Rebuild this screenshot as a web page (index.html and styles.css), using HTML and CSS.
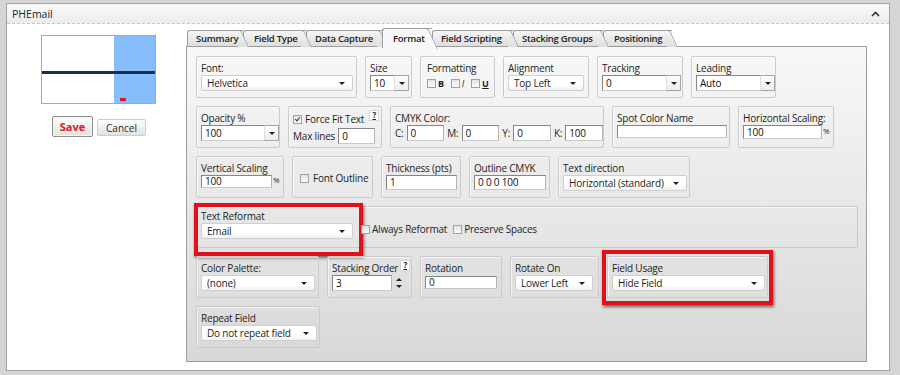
FILE: index.html
```html
<!DOCTYPE html>
<html lang="en">
<head>
    <meta charset="UTF-8">
    <meta name="viewport" content="width=device-width, initial-scale=1.0">
    <title>PHEmail</title>
    <link rel="stylesheet" href="styles.css">
</head>
<body>
    <div class="window">

        <div class="titlebar">
            <span>PHEmail</span>
            <svg class="chevron" width="9" height="6" viewBox="0 0 9 6"><polyline points="1,5 4.5,1.5 8,5" fill="none" stroke="#333" stroke-width="1.6"/></svg>
        </div>

        <div class="main">

            <div class="side">
                <div class="preview">
                    <div class="pv-white"></div>
                    <div class="pv-blue"><span class="pv-dot"></span></div>
                    <span class="pv-line"></span>
                </div>
                <div class="buttons">
                    <button class="btn save">Save</button>
                    <button class="btn cancel">Cancel</button>
                </div>
            </div>

            <div class="editor">

                <div class="tabs">
                    <div class="tab">Summary</div>
                    <div class="tab">Field Type</div>
                    <div class="tab">Data Capture</div>
                    <div class="tab active">Format</div>
                    <div class="tab">Field Scripting</div>
                    <div class="tab">Stacking Groups</div>
                    <div class="tab">Positioning</div>
                </div>

                <div class="panel">

                    <!-- row 1 -->
                    <div class="row">
                        <div class="grp g-font">
                            <div class="lbl">Font:</div>
                            <div class="select s-font"><span>Helvetica</span><i class="caret"></i></div>
                        </div>
                        <div class="grp g-size">
                            <div class="lbl">Size</div>
                            <div class="combo"><span class="field c-size">10</span><span class="drop"><i class="caret"></i></span></div>
                        </div>
                        <div class="grp g-fmt">
                            <div class="lbl">Formatting</div>
                            <div class="checks">
                                <span class="chk"></span><b>B</b>
                                <span class="chk"></span><b class="it">I</b>
                                <span class="chk"></span><b class="ul">U</b>
                            </div>
                        </div>
                        <div class="grp g-align">
                            <div class="lbl">Alignment</div>
                            <div class="select s-align"><span>Top Left</span><i class="caret"></i></div>
                        </div>
                        <div class="grp g-track">
                            <div class="lbl">Tracking</div>
                            <div class="combo"><span class="field c-wide">0</span><span class="drop"><i class="caret"></i></span></div>
                        </div>
                        <div class="grp g-lead">
                            <div class="lbl">Leading</div>
                            <div class="combo"><span class="field c-wide">Auto</span><span class="drop"><i class="caret"></i></span></div>
                        </div>
                    </div>

                    <!-- row 2 -->
                    <div class="row">
                        <div class="grp g-opac">
                            <div class="lbl">Opacity %</div>
                            <div class="combo"><span class="field c-opac">100</span><span class="drop"><i class="caret"></i></span></div>
                        </div>
                        <div class="grp g-fit">
                            <div class="line"><span class="chk on"></span>Force Fit Text<span class="help">?</span></div>
                            <div class="line">Max lines <span class="field f-max">0</span></div>
                        </div>
                        <div class="grp g-cmyk">
                            <div class="lbl">CMYK Color:</div>
                            <div class="line">
                                C: <span class="field f-c">0</span>
                                M: <span class="field f-c">0</span>
                                Y: <span class="field f-c">0</span>
                                K: <span class="field f-c">100</span>
                            </div>
                        </div>
                        <div class="grp g-spot">
                            <div class="lbl">Spot Color Name</div>
                            <span class="field f-spot"></span>
                        </div>
                        <div class="grp g-horiz">
                            <div class="lbl">Horizontal Scaling:</div>
                            <div class="line"><span class="field f-horiz">100</span><sup>%</sup></div>
                        </div>
                    </div>

                    <!-- row 3 -->
                    <div class="row">
                        <div class="grp g-vert">
                            <div class="lbl">Vertical Scaling</div>
                            <div class="line"><span class="field f-vert">100</span><sup>%</sup></div>
                        </div>
                        <div class="grp g-outl">
                            <div class="mid"><span class="chk"></span>Font Outline</div>
                        </div>
                        <div class="grp g-thick">
                            <div class="lbl">Thickness (pts)</div>
                            <span class="field f-thick">1</span>
                        </div>
                        <div class="grp g-ocmyk">
                            <div class="lbl">Outline CMYK</div>
                            <span class="field f-ocmyk">0 0 0 100</span>
                        </div>
                        <div class="grp g-dir">
                            <div class="lbl">Text direction</div>
                            <div class="select s-dir"><span>Horizontal (standard)</span><i class="caret"></i></div>
                        </div>
                    </div>

                    <!-- row 4 -->
                    <div class="row">
                        <div class="grp g-reformat">
                            <div class="sub">
                                <div class="lbl">Text Reformat</div>
                                <div class="select s-font"><span>Email</span><i class="caret"></i></div>
                                <span class="mark m-reformat"></span>
                            </div>
                            <div class="opts">
                                <span class="chk"></span>Always Reformat
                                <span class="chk second"></span>Preserve Spaces
                            </div>
                        </div>
                    </div>

                    <!-- row 5 -->
                    <div class="row">
                        <div class="grp g-pal">
                            <div class="lbl">Color Palette:</div>
                            <div class="select s-pal"><span>(none)</span><i class="caret"></i></div>
                        </div>
                        <div class="grp g-stack">
                            <div class="lbl">Stacking Order<span class="help">?</span></div>
                            <div class="line"><span class="field f-stack">3</span><span class="spin"><i class="up"></i><i class="caret"></i></span></div>
                        </div>
                        <div class="grp g-rot">
                            <div class="lbl">Rotation</div>
                            <span class="field f-rot">0</span>
                        </div>
                        <div class="grp g-roton">
                            <div class="lbl">Rotate On</div>
                            <div class="select s-roton"><span>Lower Left</span><i class="caret"></i></div>
                        </div>
                        <div class="grp g-usage">
                            <div class="lbl">Field Usage</div>
                            <div class="select s-usage"><span>Hide Field</span><i class="caret"></i></div>
                            <span class="mark m-usage"></span>
                        </div>
                    </div>

                    <!-- row 6 -->
                    <div class="row">
                        <div class="grp g-repeat">
                            <div class="lbl">Repeat Field</div>
                            <div class="select s-repeat"><span>Do not repeat field</span><i class="caret"></i></div>
                        </div>
                    </div>

                </div>
            </div>
        </div>
    </div>
</body>
</html>
```

FILE: styles.css
```css
body {
    margin: 0;
    background: #d5d5d5;
    font-family: "Open Sans", "Noto Sans", sans-serif;
    font-size: 10px;
    letter-spacing: -0.2px;
    color: #1e1e1e;
}

.window {
    box-sizing: border-box;
    width: 884px;
    height: 368px;
    margin: 3px 0 0 6px;
    border: 1px solid #a3a3a3;
    background: #fff;
}

.titlebar {
    height: 19px;
    display: flex;
    align-items: center;
    justify-content: space-between;
    padding: 0 9px 0 5px;
    background: linear-gradient(#fafafa, #ececec);
    border-bottom: 1px dashed #c6c6c6;
    font-size: 10.5px;
    letter-spacing: 0;
}

.chevron {
    display: block;
}

.main {
    display: flex;
}

/* left side: preview + buttons */

.side {
    width: 179px;
}

.preview {
    position: relative;
    display: flex;
    width: 115px;
    height: 69px;
    margin: 11px 0 0 34px;
    box-sizing: border-box;
    border: 1px solid #a8a8a8;
}

.pv-white {
    width: 72px;
    background: #fff;
}

.pv-blue {
    flex: 1;
    position: relative;
    background: #86bdfb;
}

.pv-line {
    position: absolute;
    left: 0;
    right: 0;
    top: 35px;
    height: 3px;
    background: #1b2e57;
}

.pv-dot {
    position: absolute;
    left: 6px;
    top: 62px;
    width: 6px;
    height: 3px;
    background: #e4141c;
}

.buttons {
    display: flex;
    align-items: flex-end;
    gap: 4px;
    margin: 12px 0 0 45px;
}

.btn {
    font-family: inherit;
    padding: 0;
    border-radius: 2px;
    background: linear-gradient(#fdfdfd, #e2e2e2);
    cursor: pointer;
}

.save {
    width: 41px;
    height: 21px;
    border: 1px solid #8c8c8c;
    color: #e8131b;
    font-weight: 700;
    font-size: 11px;
    box-shadow: inset 0 0 0 1px #f6f6f6;
}

.cancel {
    width: 49px;
    height: 17px;
    margin-bottom: 1px;
    border: 1px solid #cdcdcd;
    color: #2a2a2a;
    font-size: 10px;
}

/* tabs */

.editor {
    margin-top: 4px;
}

.tabs {
    display: flex;
    height: 19px;
    padding-left: 1px;
    position: relative;
    z-index: 2;
}

.tab {
    position: relative;
    box-sizing: border-box;
    height: 16px;
    margin-top: 2px;
    padding-left: 8px;
    line-height: 15px;
    font-size: 9.5px;
    font-weight: 600;
    letter-spacing: -0.25px;
    color: #222;
    white-space: nowrap;
    border-left: 1px solid #9d9d9d;
    border-top: 1px solid #9d9d9d;
    border-radius: 3px 0 0 0;
    background: linear-gradient(#f5f5f5, #dedede);
}

.tab::after {
    content: '';
    position: absolute;
    top: -1px;
    right: -6px;
    width: 10px;
    height: 16px;
    border-top: 1px solid #9d9d9d;
    border-right: 1px solid #9d9d9d;
    border-radius: 0 3px 0 0;
    background: linear-gradient(#f5f5f5, #dedede);
    transform: skewX(25deg);
    transform-origin: bottom left;
    z-index: -1;
}

.tab:nth-child(1) { z-index: 7; width: 56px; }
.tab:nth-child(2) { z-index: 6; width: 63px; padding-left: 10px; }
.tab:nth-child(3) { z-index: 5; width: 76px; }
.tab:nth-child(4) { width: 50px; }
.tab:nth-child(5) { z-index: 3; width: 81px; }
.tab:nth-child(6) { z-index: 2; width: 90px; }
.tab:nth-child(7) { z-index: 1; width: 69px; padding-left: 10px; }

.tab.active {
    z-index: 8;
    height: 20px;
    margin-top: 0;
    padding-left: 10px;
    line-height: 19px;
    background: #f8f8f8;
}

.tab.active::after {
    height: 20px;
    background: #f8f8f8;
}

/* panel */

.panel {
    box-sizing: border-box;
    width: 681px;
    height: 316px;
    margin-top: -1px;
    padding: 9px 0 0 9px;
    border: 1px solid #9d9d9d;
    background: linear-gradient(#f8f8f8, #d8d8d8);
    display: flex;
    flex-direction: column;
    gap: 8px;
}

.row {
    display: flex;
    gap: 8px;
    height: 42px;
}

.grp {
    position: relative;
    box-sizing: border-box;
    height: 42px;
    padding: 4px 0 0 4px;
    border: 1px solid #cbcbcb;
    border-radius: 2px;
    box-shadow: inset 1px 1px 0 rgba(255, 255, 255, .6);
}

.lbl {
    height: 14px;
    line-height: 14px;
    white-space: nowrap;
}

.line {
    display: flex;
    align-items: center;
    gap: 3px;
    white-space: nowrap;
}

.mid {
    display: flex;
    align-items: center;
    gap: 4px;
    height: 34px;
    padding-left: 3px;
}

.field {
    display: inline-block;
    box-sizing: border-box;
    height: 15px;
    padding: 0 3px;
    line-height: 13px;
    border: 1px solid #858585;
    border-right-color: #b5b5b5;
    border-bottom-color: #c9c9c9;
    background: #fff;
    color: #111;
    white-space: nowrap;
}

.select {
    box-sizing: border-box;
    display: flex;
    align-items: center;
    justify-content: space-between;
    height: 16px;
    padding: 0 7px 0 5px;
    border: 1px solid #cfcfcf;
    border-radius: 2px;
    background: linear-gradient(#fff 60%, #f1f1f1);
    white-space: nowrap;
}

.caret {
    display: inline-block;
    width: 0;
    height: 0;
    border-left: 3px solid transparent;
    border-right: 3px solid transparent;
    border-top: 3px solid #222;
}

.combo {
    display: flex;
    height: 16px;
}

.combo .field {
    height: 16px;
    line-height: 14px;
    border-right: none;
}

.drop {
    display: flex;
    align-items: center;
    justify-content: center;
    width: 15px;
    height: 16px;
    box-sizing: border-box;
    border: 1px solid #a5a5a5;
    border-left: 1px solid #dcdcdc;
    background: linear-gradient(#fff, #ececec);
}

.chk {
    display: inline-block;
    box-sizing: border-box;
    width: 9px;
    height: 9px;
    border: 1px solid #a0a0a0;
    background: linear-gradient(#e4e4e4, #fafafa);
    position: relative;
}

.chk.on::after {
    content: '';
    position: absolute;
    left: 2px;
    top: 0;
    width: 2px;
    height: 4px;
    border-right: 1.5px solid #333;
    border-bottom: 1.5px solid #333;
    transform: rotate(40deg);
}

.help {
    display: inline-block;
    width: 8px;
    height: 9px;
    margin-left: 2px;
    line-height: 8px;
    font-size: 8px;
    font-weight: 700;
    text-align: center;
    text-decoration: underline;
    border: 1px solid #d6d6d6;
    background: #fff;
    position: relative;
    top: -4px;
}

sup {
    font-size: 8px;
    margin-left: -2px;
    position: relative;
    top: -2px;
}

/* row 1 */

.g-font { width: 161px; }
.g-size { width: 47px; }
.g-fmt { width: 75px; padding-left: 6px; }
.g-align { width: 86px; }
.g-track { width: 86px; }
.g-lead { width: 85px; }

.s-font { width: 152px; }
.c-size { width: 24px; }
.s-align { width: 76px; }
.c-wide { width: 64px; }

.checks {
    display: flex;
    align-items: center;
    gap: 2px;
    height: 16px;
}

.checks b {
    font-size: 9px;
    margin-right: 5px;
}

.checks .it {
    font-style: italic;
    font-weight: 400;
}

.checks .ul {
    text-decoration: underline;
}

/* row 2 */

.g-opac { width: 84px; }
.g-fit { width: 94px; padding-top: 5px; display: flex; flex-direction: column; gap: 2px; }
.g-cmyk { width: 214px; }
.g-spot { width: 118px; }
.g-horiz { width: 96px; }

.c-opac { width: 64px; }
.f-max { width: 37px; height: 16px; line-height: 14px; }
.f-c { width: 38px; height: 16px; line-height: 14px; }
.f-spot { width: 110px; height: 13px; }
.f-horiz { width: 79px; height: 14px; line-height: 12px; }

/* row 3 */

.g-vert { width: 88px; }
.g-outl { width: 81px; }
.g-thick { width: 80px; }
.g-ocmyk { width: 81px; }
.g-dir { width: 132px; }

.f-vert { width: 71px; height: 13px; line-height: 11px; }
.f-thick { width: 71px; }
.f-ocmyk { width: 72px; }
.s-dir { width: 124px; }

/* row 4 */

.g-reformat {
    width: 662px;
    display: flex;
    align-items: flex-end;
    padding-bottom: 8px;
}

.sub {
    position: relative;
}

.opts {
    display: flex;
    align-items: center;
    gap: 2px;
    margin: 0 0 3px 8px;
}

.opts .second {
    margin-left: 4px;
}

.mark {
    position: absolute;
    box-sizing: border-box;
    border: 4px solid #e1101a;
    box-shadow: 1px 2px 3px rgba(0, 0, 0, .55);
    pointer-events: none;
}

.m-reformat {
    left: -7px;
    top: -6px;
    width: 169px;
    height: 53px;
}

.m-usage {
    left: -6px;
    top: -7px;
    width: 171px;
    height: 55px;
}

/* row 5 */

.g-pal { width: 123px; }
.g-stack { width: 85px; }
.g-rot { width: 82px; }
.g-roton { width: 89px; }
.g-usage { width: 161px; }

.s-pal { width: 114px; }
.f-stack { width: 60px; height: 16px; line-height: 14px; }
.f-rot { width: 72px; height: 13px; line-height: 11px; }
.s-roton { width: 78px; }
.s-usage { width: 153px; }

.spin {
    display: flex;
    flex-direction: column;
    gap: 4px;
    margin-left: 1px;
}

.up {
    display: inline-block;
    width: 0;
    height: 0;
    border-left: 3px solid transparent;
    border-right: 3px solid transparent;
    border-bottom: 3px solid #222;
}

/* row 6 */

.g-repeat { width: 124px; }
.s-repeat { width: 116px; }
```
